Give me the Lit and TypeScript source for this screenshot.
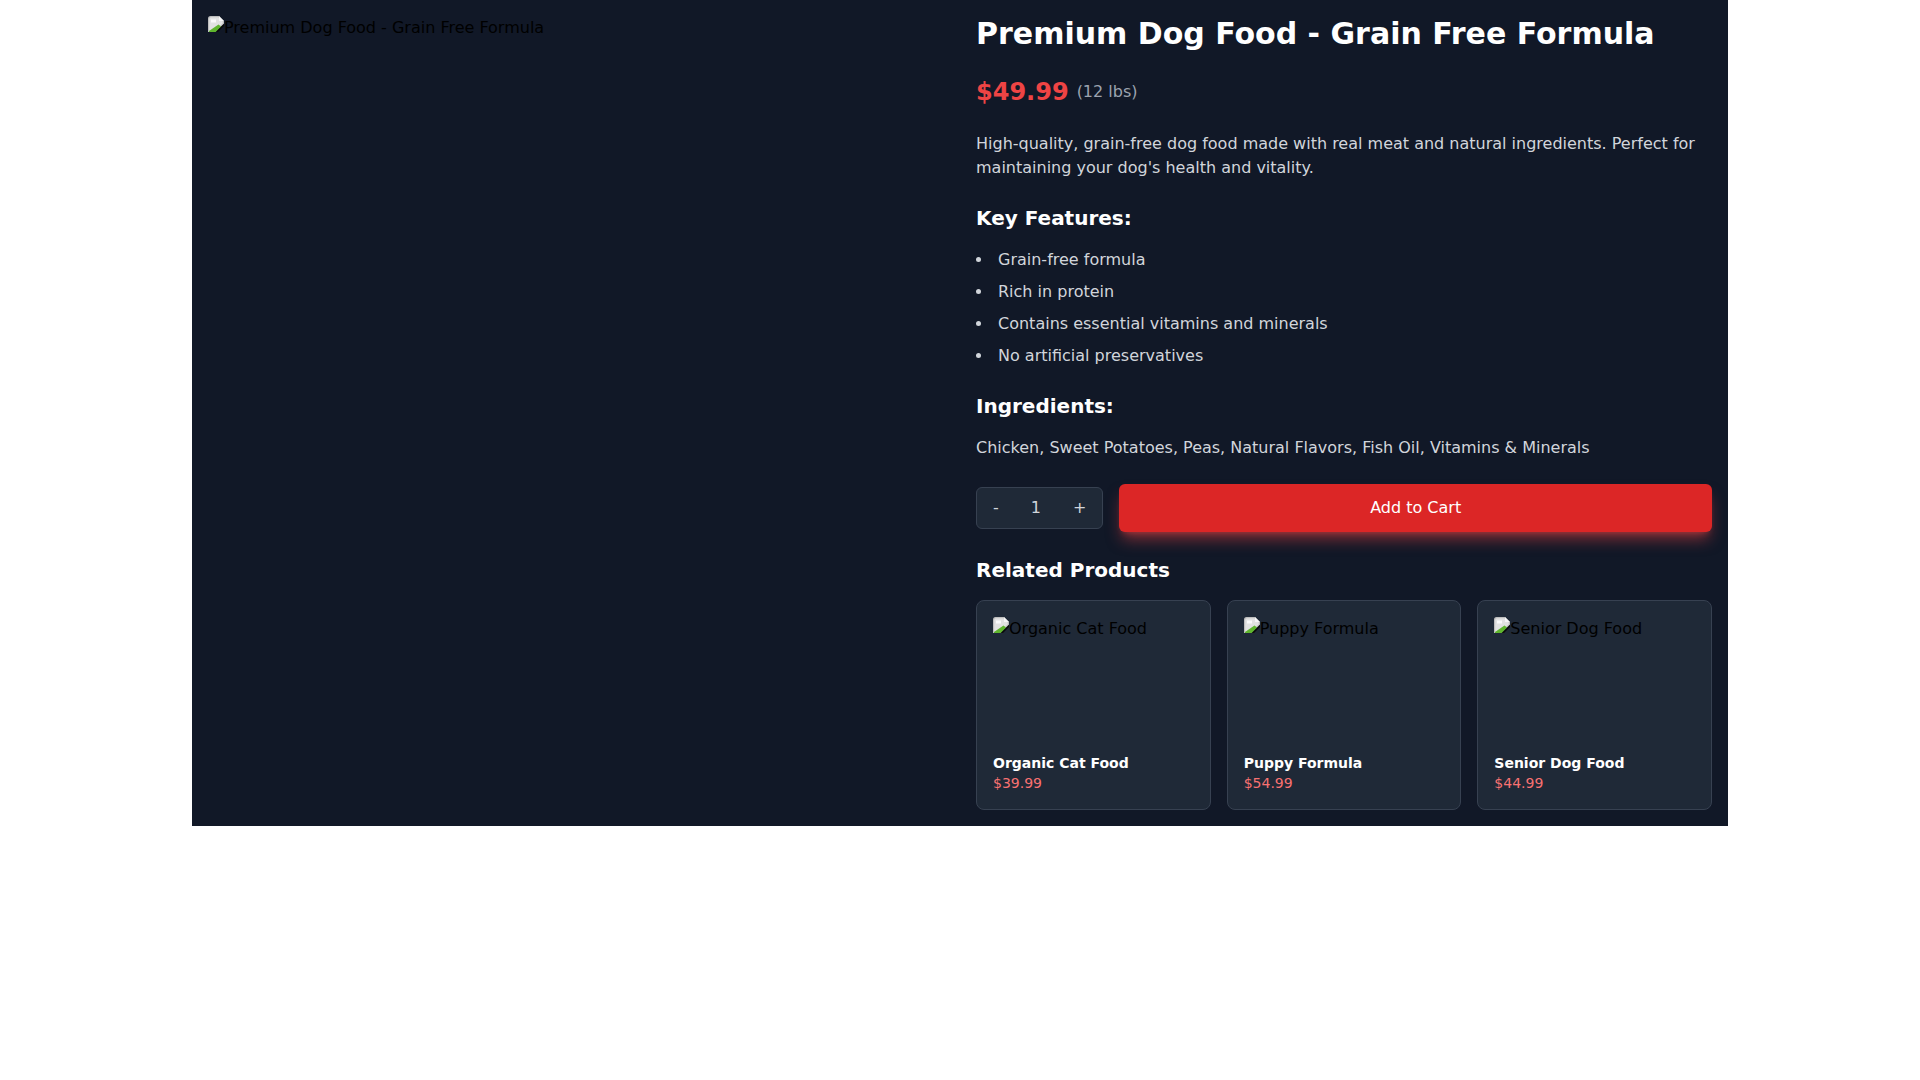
import { LitElement, html, css } from 'lit';
import { customElement, state } from 'lit/decorators.js';

const FEATURES = [
  'Grain-free formula',
  'Rich in protein',
  'Contains essential vitamins and minerals',
  'No artificial preservatives',
];

const RELATED = [
  { name: 'Organic Cat Food', price: '$39.99' },
  { name: 'Puppy Formula', price: '$54.99' },
  { name: 'Senior Dog Food', price: '$44.99' },
];

// stand-in for the browser's broken image glyph
const brokenIcon = html`<svg class="broken" width="16" height="16" viewBox="0 0 16 16">
  <path d="M0 2.500Q0 0 2.500 0H11L16 5V7.700L7.700 16H0z" fill="#bdbdbd" />
  <path d="M1.200 3Q1.200 1.200 3 1.200H10.500L14.800 5.500V7.200L7.200 14.800H1.200z" fill="#e2e2e2" />
  <path d="M11 0V5H16z" fill="#f6f6f6" />
  <path d="M3 3.500h5v3H3z" fill="#fafafa" />
  <path d="M1 16V15L10.500 8.500 13 10.500 8 16z" fill="#5fb52e" />
  <path d="M16 7.700 7.700 16H10L16 10z" fill="#0a0a0a" />
</svg>`;

@customElement('app-root')
export class AppRoot extends LitElement {
  @state() private qty = 1;

  static styles = css`
    :host {
      display: block;
      font-family: 'DejaVu Sans', sans-serif;
      font-size: 16px;
      line-height: 24px;
      color: #000;
    }

    .page {
      width: 1536px;
      margin: 0 auto;
      padding: 16px;
      box-sizing: border-box;
      background: #111827;
      display: grid;
      grid-template-columns: 736px 736px;
      gap: 32px;
    }

    .alt {
      display: flex;
      align-items: flex-start;
      white-space: nowrap;
    }

    .broken {
      flex: none;
    }

    h1 {
      margin: 0 0 24px;
      font-size: 30px;
      line-height: 36px;
      font-weight: 700;
      color: #fff;
    }

    .price-row {
      display: flex;
      align-items: center;
      gap: 8px;
      margin-bottom: 24px;
    }

    .price {
      font-size: 24px;
      line-height: 32px;
      font-weight: 700;
      color: #ef4444;
    }

    .weight {
      color: #9ca3af;
    }

    p {
      margin: 0 0 24px;
      color: #d1d5db;
    }

    h2 {
      margin: 0 0 16px;
      font-size: 20px;
      line-height: 28px;
      font-weight: 600;
      color: #fff;
    }

    ul {
      margin: 0 0 24px;
      padding: 0;
      list-style: disc inside;
      display: flex;
      flex-direction: column;
      gap: 8px;
      color: #d1d5db;
    }

    .buy {
      display: flex;
      align-items: center;
      gap: 16px;
      margin-bottom: 24px;
    }

    .qty {
      display: flex;
      align-items: center;
      box-sizing: border-box;
      height: 42px;
      border: 1px solid #374151;
      border-radius: 6px;
      background: #1f2937;
      color: #d1d5db;
    }

    .qty button {
      font: inherit;
      color: inherit;
      background: none;
      border: 0;
      padding: 8px 16px;
      cursor: pointer;
    }

    .qty span {
      padding: 0 16px;
    }

    .add {
      flex: 1;
      height: 48px;
      border: 0;
      border-radius: 6px;
      background: #dc2626;
      color: #fff;
      font: inherit;
      cursor: pointer;
      box-shadow: 0 10px 15px -3px rgba(239, 68, 68, 0.5),
        0 4px 6px -4px rgba(239, 68, 68, 0.5);
    }

    .cards {
      display: grid;
      grid-template-columns: repeat(3, 1fr);
      gap: 16px;
    }

    .card {
      box-sizing: border-box;
      padding: 16px;
      border: 1px solid #374151;
      border-radius: 8px;
      background: #1f2937;
    }

    .thumb {
      height: 128px;
      margin-bottom: 8px;
    }

    .card-name {
      font-size: 14px;
      line-height: 20px;
      font-weight: 600;
      color: #fff;
    }

    .card-price {
      font-size: 14px;
      line-height: 20px;
      color: #f87171;
    }
  `;

  render() {
    return html`
      <div class="page">
        <div class="alt">${brokenIcon}<span>Premium Dog Food - Grain Free Formula</span></div>
        <div>
          <h1>Premium Dog Food - Grain Free Formula</h1>
          <div class="price-row">
            <span class="price">$49.99</span>
            <span class="weight">(12 lbs)</span>
          </div>
          <p>
            High-quality, grain-free dog food made with real meat and natural
            ingredients. Perfect for maintaining your dog's health and vitality.
          </p>
          <h2>Key Features:</h2>
          <ul>
            ${FEATURES.map((f) => html`<li>${f}</li>`)}
          </ul>
          <h2>Ingredients:</h2>
          <p>Chicken, Sweet Potatoes, Peas, Natural Flavors, Fish Oil, Vitamins &amp; Minerals</p>
          <div class="buy">
            <div class="qty">
              <button @click=${() => (this.qty = Math.max(1, this.qty - 1))}>-</button>
              <span>${this.qty}</span>
              <button @click=${() => this.qty++}>+</button>
            </div>
            <button class="add">Add to Cart</button>
          </div>
          <h2>Related Products</h2>
          <div class="cards">
            ${RELATED.map(
              (r) => html`
                <div class="card">
                  <div class="thumb alt">${brokenIcon}<span>${r.name}</span></div>
                  <div class="card-name">${r.name}</div>
                  <div class="card-price">${r.price}</div>
                </div>
              `
            )}
          </div>
        </div>
      </div>
    `;
  }
}

declare global {
  interface HTMLElementTagNameMap {
    'app-root': AppRoot;
  }
}
